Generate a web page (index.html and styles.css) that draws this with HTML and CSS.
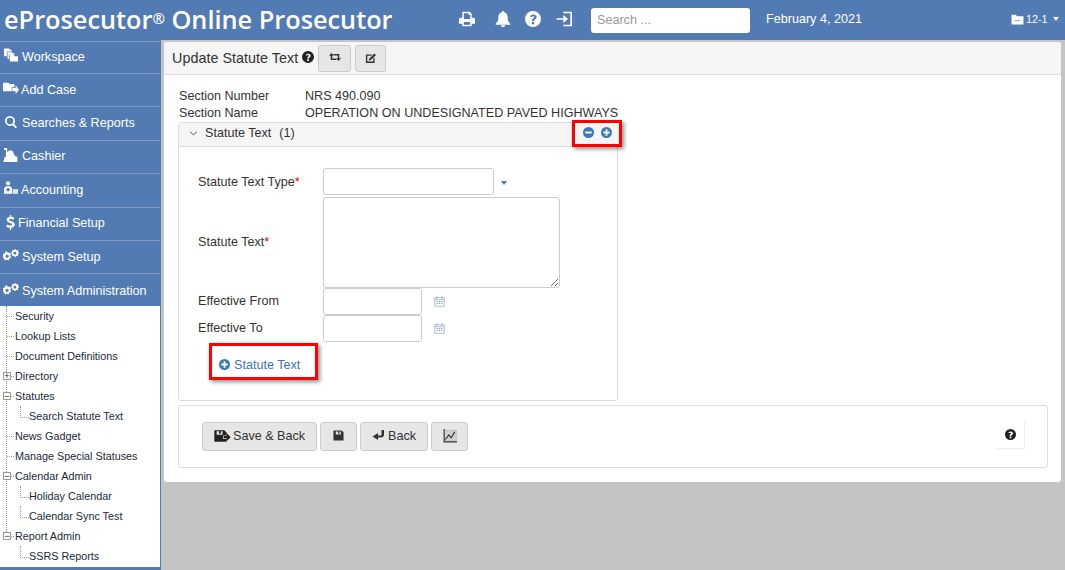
FILE: index.html
```html
<!DOCTYPE html>
<html lang="en">
<head>
  <meta charset="utf-8">
  <title>Update Statute Text - eProsecutor</title>
  <link rel="stylesheet" href="styles.css">
</head>
<body>
  <svg class="icon-defs" aria-hidden="true">
    <symbol id="i-question" viewBox="0 0 24 24"><path fill-rule="evenodd" d="M12 0a12 12 0 1 0 0 24 12 12 0 0 0 0-24zm1.8 20h-3.6v-3.4h3.6zm2.9-8.6c-.6.8-1.300 1.300-2 1.800-.7.5-.9.900-.9 1.800h-3.500c0-1.900.5-2.800 1.800-3.700.8-.6 1.700-1 1.700-2 0-.8-.7-1.300-1.600-1.300-1 0-1.800.6-2.500 1.500L7.400 8.300C8.500 6.500 10.100 5.300 12.400 5.300c2.700 0 5 1.600 5 4.100 0 .8-.3 1.400-.7 2z"/></symbol>
    <symbol id="i-printer" viewBox="0 0 24 24"><path fill-rule="evenodd" d="M5 1h11l3 3v6h2.500A2.500 2.500 0 0 1 24 12.500V19h-5v4H5v-4H0v-6.500A2.500 2.500 0 0 1 2.500 10H5zm2.200 2.200V12h9.600V5.500h-2.500V3.200zM7.200 16.500v4.300h9.600v-4.300z"/></symbol>
    <symbol id="i-bell" viewBox="0 0 24 24"><path d="M12 0a1.800 1.800 0 0 1 1.800 2C17.500 2.800 19 5.800 19 9.500c0 5 1.500 7.500 4 9.500v1.500H1V19c2.500-2 4-4.500 4-9.500C5 5.800 6.500 2.800 10.200 2A1.800 1.800 0 0 1 12 0zM9 21.500h6a3 3 0 0 1-6 0z"/></symbol>
    <symbol id="i-signin" viewBox="0 0 24 24"><path d="M11 1h13v22H11v-2.200h10.500V3.200H11zM1 10.800h10V6l7 6-7 6v-4.800H1z"/></symbol>
    <symbol id="i-case" viewBox="0 0 24 20"><path d="M1 1h8l2 3h12v15H1z"/><path fill="#8fa9cf" d="M7 11h10v2H7z"/></symbol>
    <symbol id="i-workspace" viewBox="0 0 24 24"><path d="M0 1h9l1 2h3v3H5v8H0z"/><path d="M6 7h8l1 2h3v3h-9v7H6z" opacity=".85"/><path d="M10 12h7l1 2h6v9H10z"/></symbol>
    <symbol id="i-addcase" viewBox="0 0 24 18"><path d="M0 1h8l2 2h7v5h-4v6H0z"/><path d="M14 9h5V5l5 6.500L19 18v-4h-5z"/></symbol>
    <symbol id="i-search" viewBox="0 0 24 24"><path fill-rule="evenodd" d="M10 0a10 10 0 0 1 8 16l6 6-2.800 2.500-6-6A10 10 0 1 1 10 0zm0 3.500a6.500 6.500 0 1 0 0 13 6.500 6.500 0 0 0 0-13z"/></symbol>
    <symbol id="i-cashier" viewBox="0 0 24 22"><path d="M1 0h5v6h1l2-2h5l4 8 4 2v8H0l2-8h2V3H1z"/></symbol>
    <symbol id="i-accounting" viewBox="0 0 24 24"><circle cx="7" cy="4" r="3.500"/><path fill-rule="evenodd" d="M3 9h8l3 4v9H0v-9zm4 3a3 3 0 1 0 0 6 3 3 0 0 0 0-6z"/><path opacity=".8" d="M15 14h9v8h-9z"/></symbol>
    <symbol id="i-dollar" viewBox="0 0 14 24"><path d="M6 0h2.200v2.800c1.700.2 3.300.7 4.600 1.400L12 7.400c-1.300-.7-3-1.200-4.500-1.200-1.600 0-2.600.6-2.600 1.600 0 1.100 1 1.500 3.500 2.300 3.500 1.100 5.400 2.400 5.400 5.200 0 2.700-1.900 4.500-5.600 4.900V24H6v-3.700c-2-.2-4-.8-5.500-1.700l.9-3.300c1.500.9 3.400 1.500 5.200 1.500 1.800 0 2.900-.7 2.900-1.800 0-1.100-1-1.700-3.300-2.400C2.900 11.500.9 10.300.9 7.700.9 5.200 2.700 3.400 6 2.900z"/></symbol>
    <symbol id="i-cogs" viewBox="0 0 24 18"><path fill-rule="evenodd" d="M7.500 5.500l1.400-.4 1.200 1.300 1.700-.1.500 2-1.300 1 0 1.600 1.300 1-.7 1.900-1.600-.1-1.100 1.200.2 1.600-1.900.7-1-1.300H5l-1 1.300-1.900-.7.200-1.600-1.100-1.200-1.600.1-.6-1.900 1.300-1v-1.600L0 8.800.6 6.900l1.600.1 1.100-1.200-.2-1.600L5 3.500zM6.200 8.500a2.500 2.500 0 1 0 0 5 2.500 2.500 0 0 0 0-5z"/><path fill-rule="evenodd" d="M18 0l1.200.2.400 1.400 1.300.6 1.300-.7 1 1-.7 1.300.5 1.200 1 .5v1.400l-1.400.4-.5 1.300.7 1.300-1 1-1.300-.7-1.300.5-.4 1.400h-1.400l-.4-1.400-1.300-.5-1.300.7-1-1 .7-1.300-.5-1.300-1.400-.4V5l1.400-.5.5-1.200-.7-1.300 1-1 1.300.7 1.300-.6zm-.2 4a2.200 2.200 0 1 0 0 4.400 2.200 2.200 0 0 0 0-4.400z"/></symbol>
    <symbol id="i-retweet" viewBox="0 0 24 16"><path d="M5 0l5 5.500H6.500V11H13l2.500 3H3.500V5.500H0zM8.500 2h12v8.500H24L19 16l-5-5.500h3.500V5H11z"/></symbol>
    <symbol id="i-edit" viewBox="0 0 24 24"><path fill-rule="evenodd" d="M3 3h13l-2.500 2.800H5v13h13v-6.500l3-3V22H2V3z"/><path d="M20.500 1L24 4.500 13 15.500l-5 1.500 1.500-5z"/></symbol>
    <symbol id="i-chevron" viewBox="0 0 10 6"><path fill="none" stroke="currentColor" stroke-width="1.200" d="M1 1l4 3.500L9 1"/></symbol>
    <symbol id="i-minus" viewBox="0 0 24 24"><path fill-rule="evenodd" d="M12 0a12 12 0 1 0 0 24 12 12 0 0 0 0-24zM5 10h14v4H5z"/></symbol>
    <symbol id="i-plus" viewBox="0 0 24 24"><path fill-rule="evenodd" d="M12 0a12 12 0 1 0 0 24 12 12 0 0 0 0-24zm-2 5h4v5h5v4h-5v5h-4v-5H5v-4h5z"/></symbol>
    <symbol id="i-calendar" viewBox="0 0 22 22"><path fill="none" stroke="currentColor" stroke-width="1.200" d="M1.500 3.500h19v17h-19zM1.500 7.500h19"/><path fill="currentColor" d="M5 1h2v4H5zM15 1h2v4h-2zM5 10h2.500v2H5zM9.800 10h2.500v2H9.800zM14.500 10H17v2h-2.500zM5 14h2.500v2H5zM9.800 14h2.500v2H9.800zM14.500 14H17v2h-2.500z"/></symbol>
    <symbol id="i-saveback" viewBox="0 0 28 24"><path fill-rule="evenodd" d="M0 2h17l4 4v5h-6v6h6v5H0zm4 2v6h10V4h-3v4H8V4z"/><path d="M16 12h5V7l7 7-7 7v-5h-5z"/></symbol>
    <symbol id="i-save" viewBox="0 0 24 24"><path fill-rule="evenodd" d="M2 1h17l4 4v18H1V1zm4 2v7h11V3h-3v5h-3V3z"/></symbol>
    <symbol id="i-back" viewBox="0 0 24 22"><path d="M18 0h5v9c0 4-2 6-6 6h-6v5L0 13l11-7v5h5c1.500 0 2-.7 2-2z"/></symbol>
    <symbol id="i-chart" viewBox="0 0 24 24"><path fill="#cfcfcf" d="M4 2h19v18H4z"/><path fill="none" stroke="#999" stroke-dasharray="1 1" d="M3 2h20v18H3z"/><path d="M1 0h2v21h21v2H1z"/><path fill="none" stroke="currentColor" stroke-width="2" d="M4 18l6-8 4 5 6-10"/></symbol>
  </svg>

  <header class="topbar">
    <div class="brand">eProsecutor<sup class="reg">®</sup> Online Prosecutor</div>
    <div class="top-icons">
      <svg class="top-icon top-print"><use href="#i-printer"/></svg>
      <svg class="top-icon"><use href="#i-bell"/></svg>
      <svg class="top-icon"><use href="#i-question"/></svg>
      <svg class="top-icon top-exit"><use href="#i-signin"/></svg>
    </div>
    <input class="top-search" type="text" placeholder="Search ...">
    <div class="top-date">February 4, 2021</div>
    <div class="top-case">
      <svg class="case-icon"><use href="#i-case"/></svg>
      <span>12-1</span>
      <span class="caret caret-white"></span>
    </div>
  </header>

  <div class="layout">
    <nav class="sidebar">
      <a class="nav-item"><svg class="nav-icon"><use href="#i-workspace"/></svg>Workspace</a>
      <a class="nav-item nav-tight"><svg class="nav-icon"><use href="#i-addcase"/></svg>Add Case</a>
      <a class="nav-item"><svg class="nav-icon nav-search"><use href="#i-search"/></svg>Searches &amp; Reports</a>
      <a class="nav-item"><svg class="nav-icon"><use href="#i-cashier"/></svg>Cashier</a>
      <a class="nav-item nav-tight"><svg class="nav-icon"><use href="#i-accounting"/></svg>Accounting</a>
      <a class="nav-item"><svg class="nav-dollar"><use href="#i-dollar"/></svg>Financial Setup</a>
      <a class="nav-item"><svg class="nav-icon"><use href="#i-cogs"/></svg>System Setup</a>
      <a class="nav-item"><svg class="nav-icon"><use href="#i-cogs"/></svg>System Administration</a>

      <ul class="tree">
        <li>Security</li>
        <li>Lookup Lists</li>
        <li>Document Definitions</li>
        <li class="has-toggle"><span class="toggle">+</span>Directory</li>
        <li class="has-toggle"><span class="toggle">−</span>Statutes</li>
        <li class="child">Search Statute Text</li>
        <li>News Gadget</li>
        <li>Manage Special Statuses</li>
        <li class="has-toggle"><span class="toggle">−</span>Calendar Admin</li>
        <li class="child">Holiday Calendar</li>
        <li class="child">Calendar Sync Test</li>
        <li class="has-toggle"><span class="toggle">−</span>Report Admin</li>
        <li class="child">SSRS Reports</li>
      </ul>
    </nav>

    <main class="content">
      <div class="page-head">
        <span class="page-title">Update Statute Text</span>
        <svg class="help-icon"><use href="#i-question"/></svg>
        <button class="btn btn-head"><svg class="btn-icon-sm"><use href="#i-retweet"/></svg></button>
        <button class="btn btn-head btn-head-narrow"><svg class="btn-icon"><use href="#i-edit"/></svg></button>
      </div>

      <div class="page-body">
        <dl class="info">
          <dt>Section Number</dt><dd>NRS 490.090</dd>
          <dt>Section Name</dt><dd>OPERATION ON UNDESIGNATED PAVED HIGHWAYS</dd>
        </dl>

        <section class="panel">
          <div class="panel-head">
            <svg class="chevron"><use href="#i-chevron"/></svg>
            <span class="panel-title">Statute Text</span>
            <span>(1)</span>
            <div class="highlight panel-tools">
              <svg class="circle-icon"><use href="#i-minus"/></svg>
              <svg class="circle-icon"><use href="#i-plus"/></svg>
            </div>
          </div>
          <div class="panel-body">
            <div class="form-row row-type">
              <label>Statute Text Type<span class="req">*</span></label>
              <input class="field field-type" type="text">
              <span class="caret caret-blue"></span>
            </div>
            <div class="form-row row-text">
              <label>Statute Text<span class="req">*</span></label>
              <textarea class="field field-text"></textarea>
            </div>
            <div class="form-row">
              <label>Effective From</label>
              <input class="field field-date" type="text">
              <svg class="cal-icon"><use href="#i-calendar"/></svg>
            </div>
            <div class="form-row">
              <label>Effective To</label>
              <input class="field field-date" type="text">
              <svg class="cal-icon"><use href="#i-calendar"/></svg>
            </div>
            <a class="highlight add-link">
              <svg class="circle-icon"><use href="#i-plus"/></svg>
              Statute Text
            </a>
          </div>
        </section>

        <div class="actions">
          <button class="btn btn-action"><svg class="btn-saveback"><use href="#i-saveback"/></svg>Save &amp; Back</button>
          <button class="btn btn-action btn-square"><svg class="btn-icon"><use href="#i-save"/></svg></button>
          <button class="btn btn-action"><svg class="btn-back"><use href="#i-back"/></svg>Back</button>
          <button class="btn btn-action btn-square"><svg class="btn-icon-lg"><use href="#i-chart"/></svg></button>
          <div class="help-box"><svg class="help-icon"><use href="#i-question"/></svg></div>
        </div>
      </div>
    </main>
  </div>
</body>
</html>
```

FILE: styles.css
```css
* {
  box-sizing: border-box;
}

body {
  margin: 0;
  height: 570px;
  overflow: hidden;
  font-family: "Liberation Sans", Arial, sans-serif;
  font-size: 12.6px;
  color: #333;
  background: #c4c4c4;
}

.icon-defs {
  display: none;
}

/* top bar */
.topbar {
  height: 40px;
  background: #527ab3;
  color: white;
  display: flex;
  align-items: center;
  padding-bottom: 2px;
}

.brand {
  width: 459px;
  padding-left: 4px;
  font-family: "Open Sans", sans-serif;
  font-size: 25.3px;
  font-weight: 600;
  white-space: nowrap;
  line-height: 38px;
}

.reg {
  font-size: 15px;
  line-height: 0;
  vertical-align: 5px;
}

.top-icons {
  display: flex;
  align-items: center;
  gap: 14px;
  width: 132px;
}

.top-icon {
  width: 16px;
  height: 16px;
  fill: white;
}

.top-print {
  margin-right: 6px;
}

.top-exit {
  margin-left: 1px;
}

.top-search {
  width: 159px;
  height: 25px;
  margin-top: 2px;
  border: 0;
  border-radius: 3px;
  padding: 0 6px;
  font: 12.6px "Liberation Sans", sans-serif;
}

.top-search::placeholder {
  color: #999;
}

.top-date {
  margin-left: 16px;
  width: 245px;
}

.top-case {
  display: flex;
  align-items: center;
  gap: 2px;
  font-size: 10.8px;
}

.case-icon {
  width: 13px;
  height: 11px;
  fill: white;
}

.caret {
  display: inline-block;
  width: 0;
  height: 0;
  border-left: 3.5px solid transparent;
  border-right: 3.5px solid transparent;
  border-top: 4px solid white;
}

.caret-white {
  margin-left: 3px;
}

.caret-blue {
  border-top-color: #4a7ab8;
  margin-left: 7px;
  margin-top: 2px;
}

/* left side */
.layout {
  display: flex;
  height: 530px;
}

.sidebar {
  width: 161px;
  background: #527ab3;
  flex-shrink: 0;
  border-right: 1px solid #527ab3;
  height: 530px;
  padding-top: 0.6px;
}

.nav-item {
  display: flex;
  align-items: center;
  height: 33.4px;
  color: white;
  padding: 0 0 1px 3px;
  border-bottom: 1px solid #7d9ac8;
  gap: 3px;
  white-space: nowrap;
}

.nav-item:first-child {
  border-top: 1px solid #7d9ac8;
}

.nav-item:nth-child(8) {
  border-bottom: 0;
}

.nav-icon {
  width: 16px;
  height: 14px;
  fill: white;
  margin-top: -3px;
}

.nav-tight .nav-icon {
  margin-right: -1px;
}

.nav-search {
  margin-left: 2px;
  width: 12px;
  height: 12px;
  margin-right: 2px;
}

.nav-dollar {
  width: 9px;
  height: 15px;
  fill: white;
  margin: -2px 0 0 3px;
}

.tree {
  list-style: none;
  margin: -1.4px 0 0;
  padding: 0;
  height: 261px;
  background: white;
  position: relative;
  color: #1a2a3a;
  font-size: 10.8px;
}

.tree::before {
  content: "";
  position: absolute;
  left: 6px;
  top: 0;
  height: 232px;
  border-left: 1px dotted #999;
}

.tree li {
  height: 20px;
  line-height: 20px;
  padding-left: 15px;
  position: relative;
  white-space: nowrap;
}

.tree li::before {
  content: "";
  position: absolute;
  left: 7px;
  top: 10px;
  width: 7px;
  border-top: 1px dotted #999;
}

.tree li.child {
  padding-left: 29px;
}

.tree li.child::before {
  left: 20px;
  top: 0;
  width: 8px;
  height: 11px;
  border-left: 1px dotted #999;
  border-bottom: 1px dotted #999;
  border-top: 0;
}

.toggle {
  position: absolute;
  left: 3px;
  top: 6px;
  width: 8px;
  height: 8px;
  background: white;
  border: 1px solid #999;
  font-size: 9px;
  line-height: 6px;
  text-align: center;
  color: #222;
  z-index: 1;
}

/* main panel */
.content {
  width: 897px;
  height: 440px;
  margin: 2px 0 0 3px;
  background: white;
  border-radius: 3px;
}

.page-head {
  height: 33px;
  background: #f5f5f5;
  border-bottom: 1px solid #ddd;
  border-radius: 3px 3px 0 0;
  display: flex;
  align-items: center;
  padding-left: 8px;
}

.page-title {
  font-size: 14.4px;
  padding-bottom: 1px;
}

.help-icon {
  width: 12px;
  height: 12px;
  fill: #222;
  margin: 0 0 2px 4px;
  flex-shrink: 0;
}

.btn {
  background: #e6e6e6;
  border: 1px solid #ccc;
  border-radius: 3px;
  color: #333;
  font: 12.6px "Liberation Sans", sans-serif;
  display: inline-flex;
  align-items: center;
  justify-content: center;
  padding: 0;
}

.btn-head {
  width: 33px;
  height: 27px;
  margin-left: 4px;
}

.btn-head-narrow {
  width: 31px;
}

.btn-icon {
  width: 11px;
  height: 11px;
  fill: #333;
}

.btn-icon-sm {
  width: 12px;
  height: 8px;
  fill: #333;
  margin-bottom: 3px;
}

.btn-icon-lg {
  width: 14px;
  height: 14px;
  fill: #333;
  color: #333;
}

.page-body {
  padding: 13px 14px 0;
}

.info {
  display: grid;
  grid-template-columns: 126px auto;
  margin: 0;
  padding-left: 1px;
  line-height: 17px;
}

.info dd {
  margin: 0;
}

.panel {
  width: 440px;
  height: 279px;
  border: 1px solid #ddd;
  border-radius: 3px;
}

.panel-head {
  height: 24px;
  background: #f5f5f5;
  border-bottom: 1px solid #ddd;
  display: flex;
  align-items: center;
  padding: 0 0 3px 10px;
  gap: 6px;
  position: relative;
}

.chevron {
  width: 9px;
  height: 5px;
  color: #555;
  margin-right: 1px;
}

.panel-title {
  margin-right: 2px;
}

.highlight {
  border: 3px solid #ff0000;
  box-shadow: 2px 2px 4px rgba(0, 0, 0, 0.45);
}

.panel-tools {
  position: absolute;
  right: -5px;
  top: -3px;
  width: 50px;
  height: 27px;
  padding-bottom: 2px;
  background: #f5f5f5;
  display: flex;
  align-items: center;
  justify-content: center;
  gap: 7px;
}

.circle-icon {
  width: 11px;
  height: 11px;
  fill: #3a78b8;
}

.panel-body {
  padding: 21px 0 0 19px;
}

.form-row {
  display: flex;
  align-items: center;
}

.form-row label {
  width: 125px;
  flex-shrink: 0;
  padding-bottom: 2px;
}

.row-type label {
  padding-bottom: 0;
}

.req {
  color: #e00;
}

.field {
  border: 1px solid #ccc;
  border-radius: 3px;
  background: white;
  display: block;
}

.field-type {
  width: 171px;
  height: 27px;
}

.row-text {
  margin-top: 2px;
}

.field-text {
  width: 237px;
  height: 91px;
  margin: 0;
}

.field-date {
  width: 99px;
  height: 27px;
}

.cal-icon {
  width: 11px;
  height: 11px;
  color: #7b96c4;
  margin-left: 12px;
}

.add-link {
  display: flex;
  align-items: center;
  gap: 4px;
  width: 109px;
  height: 37px;
  margin: 1px 0 0 11px;
  padding: 6px 0 0 7px;
  color: #3a78b8;
  background: white;
}

.actions {
  width: 870px;
  height: 63px;
  margin-top: 4px;
  border: 1px solid #ddd;
  border-radius: 3px;
  display: flex;
  align-items: center;
  padding-left: 23px;
  gap: 3px;
}

.btn-action {
  height: 29px;
  padding: 0 11px 2px;
  gap: 2px;
}

.btn-square {
  width: 37px;
  padding: 0 0 2px;
}

.btn-saveback {
  width: 17px;
  height: 14px;
  fill: #222;
}

.btn-back {
  width: 13px;
  height: 11px;
  fill: #333;
  margin-right: 1px;
}

.help-box {
  margin: 0 22px 3px auto;
  width: 28px;
  height: 28px;
  border-right: 1px solid #eee;
  border-bottom: 1px solid #eee;
  display: flex;
  align-items: center;
  justify-content: center;
}

.help-box .help-icon {
  width: 11px;
  height: 11px;
  margin: 0;
}
```
